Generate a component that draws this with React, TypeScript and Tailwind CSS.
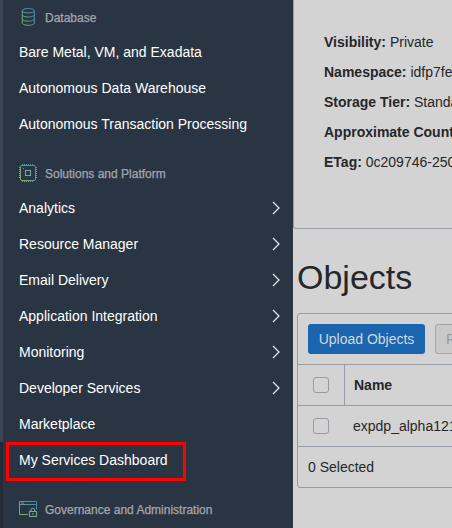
import type { ReactNode } from 'react';

function Gradient({ id }: { id: string }) {
  return (
    <defs>
      <linearGradient id={id} x1="0" y1="18" x2="18" y2="0" gradientUnits="userSpaceOnUse">
        <stop offset="0" stopColor="#86b55a" />
        <stop offset="0.5" stopColor="#5f9c92" />
        <stop offset="1" stopColor="#4380bd" />
      </linearGradient>
    </defs>
  );
}

function DatabaseIcon() {
  return (
    <svg width="18" height="18" viewBox="0 0 18 18" fill="none" stroke="url(#db)">
      <Gradient id="db" />
      <ellipse cx="9.3" cy="2.7" rx="6" ry="2.2" />
      <path d="M3.3 2.7v12.4c0 1.2 2.7 2.2 6 2.2s6-1 6-2.2V2.7M3.3 6.8C3.3 8 6 9 9.3 9s6-1 6-2.2M3.3 11c0 1.2 2.7 2.2 6 2.2s6-1 6-2.2" />
    </svg>
  );
}

function ChipIcon() {
  return (
    <svg width="18" height="18" viewBox="0 0 18 18" fill="none" stroke="url(#chip)">
      <Gradient id="chip" />
      <rect x="1.5" y="1.5" width="15" height="15" rx="1.5" />
      <rect x="6.5" y="6.5" width="5" height="5" stroke="#76aaa0" />
      <path d="M3 .5h12M3 17.5h12M.5 3v12M17.5 3v12" strokeDasharray="1 1" />
      <path d="M4 4.5h1" />
    </svg>
  );
}

function GovernanceIcon() {
  return (
    <svg width="18" height="16" viewBox="0 0 18 16" fill="none" stroke="url(#gov)">
      <Gradient id="gov" />
      <path d="M9 13.5H.5V.5h17v8M.5 3.5h17M2 2h3" />
      <rect x="10.5" y="10.5" width="7" height="5" stroke="#76ad87" />
      <path d="M12 10.5V9a1.8 1.8 0 0 1 3.6 0v1.5M14 12v2" stroke="#70a79b" />
    </svg>
  );
}

function Section({ icon, label }: { icon: ReactNode; label: string }) {
  return (
    <div className="flex h-[34px] items-center gap-2 pl-4 text-[12px] text-[#a2a7ad] [-webkit-text-stroke:0.25px]">
      {icon}
      <span className="pt-px">{label}</span>
    </div>
  );
}

function Item({ label, arrow }: { label: string; arrow?: boolean }) {
  return (
    <div className="flex h-9 items-center justify-between pr-[13px] pl-4 text-[14px] text-white">
      <span>{label}</span>
      {arrow && (
        <svg width="8" height="14" viewBox="0 0 8 14" fill="none" stroke="#e7e9eb" strokeWidth="1.2">
          <path d="M1 1l6 6-6 6" />
        </svg>
      )}
    </div>
  );
}

function Fact({ label, value }: { label: string; value?: string }) {
  return (
    <div className="h-[30.1px] leading-[30px]">
      <b>{label}</b> {value}
    </div>
  );
}

function Checkbox() {
  return <span className="block size-4 rounded-[3px] border border-[#969ba1]" />;
}

export default function App() {
  return (
    <div className="flex h-[528px] w-[452px] overflow-hidden bg-[#d3d3d3] whitespace-nowrap font-['Liberation_Sans',Arial,sans-serif] text-[14px] text-[#252729]">
      <div className="w-[3px] shrink-0">
        <div className="h-[442px] bg-[#3a4553]" />
        <div className="h-[86px] bg-[#242b36]" />
      </div>
      <nav className="w-[290px] shrink-0 bg-[#2a3544]">
        <Section icon={<DatabaseIcon />} label="Database" />
        <Item label="Bare Metal, VM, and Exadata" />
        <Item label="Autonomous Data Warehouse" />
        <Item label="Autonomous Transaction Processing" />
        <div className="h-[14px]" />
        <Section icon={<ChipIcon />} label="Solutions and Platform" />
        <Item label="Analytics" arrow />
        <Item label="Resource Manager" arrow />
        <Item label="Email Delivery" arrow />
        <Item label="Application Integration" arrow />
        <Item label="Monitoring" arrow />
        <Item label="Developer Services" arrow />
        <Item label="Marketplace" />
        <div className="relative">
          <Item label="My Services Dashboard" />
          <div className="absolute top-0 left-[3px] h-[39px] w-[180px] border-3 border-[#ff0000]" />
        </div>
        <div className="h-[14px]" />
        <Section icon={<GovernanceIcon />} label="Governance and Administration" />
      </nav>
      <main className="w-[159px] shrink-0 overflow-hidden">
        <section className="h-[229px] w-[300px] rounded-bl-[3px] border-b border-l border-[#969ca3] pt-[27px] pl-[30px]">
          <Fact label="Visibility:" value="Private" />
          <Fact label="Namespace:" value="idfp7fe" />
          <Fact label="Storage Tier:" value="Standa" />
          <Fact label="Approximate Count" />
          <Fact label="ETag:" value="0c209746-250" />
        </section>
        <h1 className="mt-6 pl-1 text-[34px] leading-[49px] h-12">Objects</h1>
        <section className="mt-3 ml-1 w-[300px] rounded-l-[3px] border border-[#969ca3]">
          <div className="flex h-[51px] items-center gap-[10px] border-b border-[#969ca3] pl-[10px]">
            <div className="flex h-[30px] w-[117px] items-center justify-center rounded-[3px] bg-[#1b65ae] text-[#d3d8df]">Upload Objects</div>
            <div className="h-[30px] w-[90px] rounded-[3px] border border-[#a6a6a6] bg-[#c9c9c9] pl-[10px] leading-7 text-[#999999]">R</div>
          </div>
          <div className="flex h-[41px] border-b border-[#969ca3]">
            <div className="flex w-[47px] items-center border-r border-[#969ca3] pl-[15px]"><Checkbox /></div>
            <b className="pl-[9px] leading-10">Name</b>
          </div>
          <div className="flex h-[41px] items-center border-b border-[#969ca3] pl-[15px]">
            <Checkbox />
            <span className="pl-6">expdp_alpha121</span>
          </div>
          <div className="h-10 pl-[10px] leading-10">0 Selected</div>
        </section>
      </main>
    </div>
  );
}
